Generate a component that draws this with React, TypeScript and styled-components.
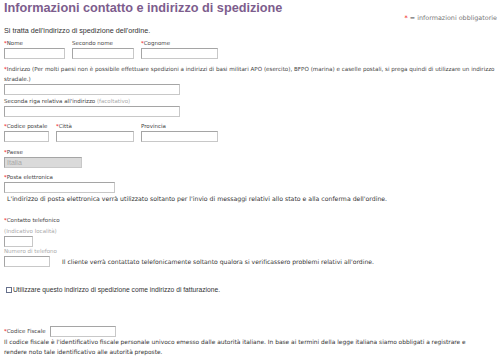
import React from "react";
import styled, { createGlobalStyle } from "styled-components";

const GlobalStyle = createGlobalStyle`
  body {
    margin: 0;
    background: #fff;
    font-family: "DejaVu Sans", Verdana, sans-serif;
    color: #333;
  }
`;

const Page = styled.div`
  width: 499px;
  height: 359px;
  padding: 1px 4px 0 4px;
  box-sizing: border-box;
  overflow: hidden;
`;

const Header = styled.div`
  display: flex;
  flex-direction: column;
`;

const Title = styled.h1`
  margin: 0;
  font-family: "Liberation Sans", Arial, sans-serif;
  font-size: 12.7px;
  font-weight: bold;
  color: #7d5d8d;
  line-height: 14px;
`;

const Legend = styled.div`
  align-self: flex-end;
  margin-top: -1px;
  margin-right: -2px;
  font-size: 6.4px;
  color: #777;
  line-height: 8px;
`;

const Star = styled.span`
  color: #e00;
`;

const Intro = styled.p`
  margin: 4px 0 5px 0;
  font-family: "Liberation Sans", Arial, sans-serif;
  font-size: 7.2px;
  color: #333;
  line-height: 9px;
`;

const Row = styled.div<{ $gap?: number; $mt?: number }>`
  display: flex;
  gap: ${(p) => p.$gap ?? 7}px;
  margin-top: ${(p) => p.$mt ?? 0}px;
  align-items: flex-end;
`;

const Field = styled.div`
  display: flex;
  flex-direction: column;
`;

const Label = styled.label<{ $muted?: boolean }>`
  font-size: 5.5px;
  line-height: 7px;
  color: ${(p) => (p.$muted ? "#aaa" : "#444")};
  height: 7px;
  margin-bottom: 1px;
  white-space: nowrap;
`;

const Note = styled.span`
  color: #aaa;
`;

const LongLabel = styled.div`
  font-size: 5.6px;
  line-height: 10px;
  color: #444;
  margin-top: 5px;
  white-space: nowrap;
`;

const Input = styled.div<{ $w: number; $disabled?: boolean }>`
  width: ${(p) => p.$w}px;
  height: 11px;
  box-sizing: border-box;
  border: 1px solid #a5a5a5;
  border-right-color: #c8c8c8;
  border-bottom-color: #c8c8c8;
  background: ${(p) => (p.$disabled ? "#dadada" : "#fff")};
  font-family: "Liberation Sans", Arial, sans-serif;
  font-size: 7px;
  line-height: 9px;
  color: #a8a8a8;
  padding-left: 2px;
`;

const Help = styled.div`
  font-size: 6.2px;
  line-height: 8px;
  color: #333;
  padding-left: 3px;
  margin-top: 2px;
  white-space: nowrap;
`;

const InlineHelp = styled.span`
  font-size: 6.1px;
  line-height: 11px;
  color: #333;
  margin-left: 5px;
  white-space: nowrap;
`;

const CheckRow = styled.label`
  display: flex;
  align-items: center;
  gap: 1px;
  height: 8px;
  margin-top: 19px;
  margin-left: 2px;
  font-family: "Liberation Sans", Arial, sans-serif;
  font-size: 6.7px;
  line-height: 8px;
  color: #333;
`;

const Box = styled.span`
  width: 6px;
  height: 6px;
  box-sizing: border-box;
  border: 1px solid #66708c;
  background: #fff;
  display: inline-block;
`;

const FiscalRow = styled.div`
  display: flex;
  align-items: center;
  gap: 4px;
  margin-top: 32px;

  ${Label} {
    margin-bottom: 0;
  }
`;

const FiscalText = styled.div`
  font-size: 5.9px;
  line-height: 10px;
  color: #333;
  white-space: nowrap;
`;

export default function App() {
  return (
    <>
      <GlobalStyle />
      <Page>
        <Header>
          <Title>Informazioni contatto e indirizzo di spedizione</Title>
          <Legend>
            <Star>*</Star> = informazioni obbligatorie
          </Legend>
        </Header>
        <Intro>Si tratta dell'indirizzo di spedizione dell'ordine.</Intro>

        <Row>
          <Field>
            <Label><Star>*</Star>Nome</Label>
            <Input $w={61} />
          </Field>
          <Field>
            <Label>Secondo nome</Label>
            <Input $w={62} />
          </Field>
          <Field>
            <Label><Star>*</Star>Cognome</Label>
            <Input $w={77} />
          </Field>
        </Row>

        <LongLabel>
          <Star>*</Star>Indirizzo (Per molti paesi non è possibile effettuare spedizioni a
          indirizzi di basi militari APO (esercito), BFPO (marina) e caselle postali, si prega
          quindi di utilizzare un indirizzo
          <br />
          stradale.)
        </LongLabel>
        <Input $w={176} />

        <Row $mt={3}>
          <Field>
            <Label>
              Seconda riga relativa all'indirizzo <Note>(facoltativo)</Note>
            </Label>
            <Input $w={176} />
          </Field>
        </Row>

        <Row $mt={6}>
          <Field>
            <Label><Star>*</Star>Codice postale</Label>
            <Input $w={45} />
          </Field>
          <Field>
            <Label><Star>*</Star>Città</Label>
            <Input $w={78} />
          </Field>
          <Field>
            <Label>Provincia</Label>
            <Input $w={77} />
          </Field>
        </Row>

        <Row $mt={7}>
          <Field>
            <Label><Star>*</Star>Paese</Label>
            <Input $w={78} $disabled>Italia</Input>
          </Field>
        </Row>

        <Row $mt={6}>
          <Field>
            <Label><Star>*</Star>Posta elettronica</Label>
            <Input $w={111} />
          </Field>
        </Row>
        <Help>
          L'indirizzo di posta elettronica verrà utilizzato soltanto per l'invio di messaggi
          relativi allo stato e alla conferma dell'ordine.
        </Help>

        <Row $mt={14}>
          <Label><Star>*</Star>Contatto telefonico</Label>
        </Row>
        <Row $mt={3}>
          <Field>
            <Label $muted>(Indicativo località)</Label>
            <Input $w={29} />
          </Field>
        </Row>
        <Row $mt={1} $gap={0}>
          <Field>
            <Label $muted>Numero di telefono</Label>
            <Input $w={46} />
          </Field>
          <InlineHelp>
            Il cliente verrà contattato telefonicamente soltanto qualora si verificassero
            problemi relativi all'ordine.
          </InlineHelp>
        </Row>

        <CheckRow>
          <Box />
          Utilizzare questo indirizzo di spedizione come indirizzo di fatturazione.
        </CheckRow>

        <FiscalRow>
          <Label><Star>*</Star>Codice Fiscale</Label>
          <Input $w={66} />
        </FiscalRow>
        <FiscalText>
          Il codice fiscale è l'identificativo fiscale personale univoco emesso dalle autorità
          italiane. In base ai termini della legge italiana siamo obbligati a registrare e
          <br />
          rendere noto tale identificativo alle autorità preposte.
        </FiscalText>
      </Page>
    </>
  );
}
